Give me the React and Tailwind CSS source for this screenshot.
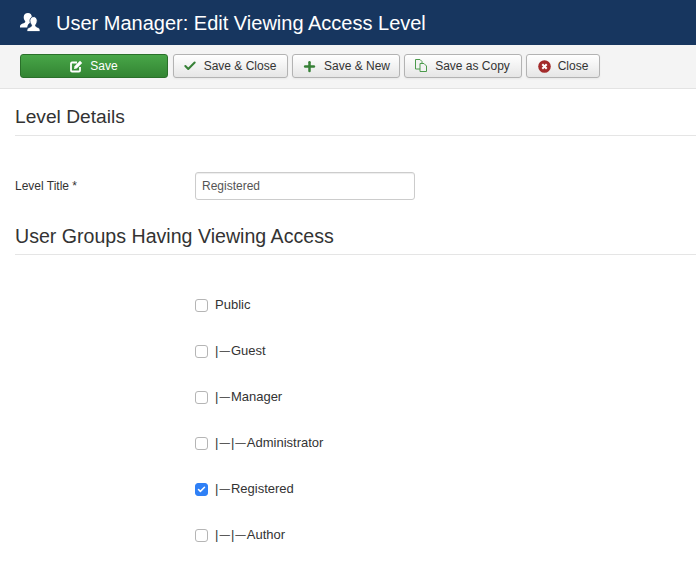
import { Check, Plus } from "lucide-react";

function UsersIcon() {
  return (
    <svg width="20" height="19" viewBox="0 0 20 19" fill="#fff">
      <path d="M8 0c2.300 0 3.800 1.600 3.800 3.900 0 1.500-.6 2.900-1.400 3.800-.5.700-.3 1.300.3 1.700-2 .8-3.200 2.300-3.500 5H0c-.2-1.600.3-2.700 1.700-3.400 1.300-.6 2.900-1 3.400-1.700.3-.5.200-1-.2-1.600C4.200 6.800 3.700 5.500 3.700 3.900 3.800 1.600 5.500 0 8 0z" />
      <path
        d="M13.200 3.500c2.400 0 4 1.800 4 4.200 0 1.600-.6 3-1.400 4-.4.600-.4 1.100 0 1.600.6.700 2 1 3 1.600 1 .6 1.400 1.700 1.200 3.600H7c-.2-1.900.2-3 1.300-3.600 1-.6 2.400-.9 3-1.600.4-.5.4-1 0-1.600-.8-1-1.400-2.400-1.400-4 0-2.400 1.800-4.200 4.300-4.200z"
        stroke="#17365f"
        strokeWidth="0.800"
      />
    </svg>
  );
}

function EditIcon() {
  return (
    <svg width="13" height="13" viewBox="0 0 13 13" fill="none">
      <path d="M10 7v3.500a1 1 0 0 1-1 1H2a1 1 0 0 1-1-1V3.500a1 1 0 0 1 1-1h5" stroke="#fff" strokeWidth="1.800" />
      <path d="M4.500 6.300 10 .8l2.200 2.200-5.500 5.500-2.700.5z" fill="#fff" />
    </svg>
  );
}

function CopyIcon() {
  return (
    <svg width="14" height="14" viewBox="0 0 14 14" fill="none" stroke="#4c9a4c" strokeWidth="1">
      <path d="M1.500 .5h4.500l2 2v7.500h-6.500z" fill="#f3f3f3" />
      <path d="M6 4.500h4l2.500 2.500v5.500H6z" fill="#f3f3f3" />
    </svg>
  );
}

function CloseIcon() {
  return (
    <svg width="13" height="13" viewBox="0 0 13 13">
      <circle cx="6.500" cy="6.500" r="6.300" fill="#a32b2b" />
      <path d="M4.300 4.300l4.400 4.400M8.700 4.300l-4.400 4.400" stroke="#fff" strokeWidth="2" />
    </svg>
  );
}

function ToolButton({ icon, label, width }) {
  return (
    <button className={`flex h-6 items-center justify-center gap-[7px] rounded-[3px] border border-[#b3b3b3] bg-gradient-to-b from-[#ffffff] to-[#e6e6e6] text-xs text-[#333] shadow-[0_1px_2px_rgba(0,0,0,0.05)] ${width}`}>
      {icon}
      {label}
    </button>
  );
}

const groups = [
  { label: "Public", depth: 0 },
  { label: "Guest", depth: 1 },
  { label: "Manager", depth: 1 },
  { label: "Administrator", depth: 2 },
  { label: "Registered", depth: 1, checked: true },
  { label: "Author", depth: 2 },
];

function GroupRow({ label, depth, checked }) {
  return (
    <label className="flex h-[46px] items-center gap-[7px] text-[13px] text-[#333]">
      <span className="relative size-[13px]">
        <input
          type="checkbox"
          defaultChecked={checked}
          className="m-0 block size-[13px] appearance-none rounded-[3px] border border-[#b5b5b5] bg-white checked:border-[#2f80f6] checked:bg-[#2f80f6]"
        />
        {checked && <Check size={9} strokeWidth={4} className="absolute top-[2px] left-[2px] text-white" />}
      </span>
      <span>
        {Array.from({ length: depth }).map((_, i) => (
          <span key={i}>
            |<span className="inline-block w-[12.500px] text-center align-[1px] text-[10.500px]">—</span>
          </span>
        ))}
        {label}
      </span>
    </label>
  );
}

export default function App() {
  return (
    <div className="h-[568px] w-[696px] overflow-hidden bg-white font-['Liberation_Sans',Arial,sans-serif]">
      <header className="flex h-[45px] items-center gap-4 bg-[#17365f] pl-5 text-[#fff]">
        <UsersIcon />
        <h1 className="text-[20px] leading-none">User Manager: Edit Viewing Access Level</h1>
      </header>

      <div className="flex h-11 items-start gap-1 border-b border-[#e3e3e3] bg-[#f4f4f4] pt-[9px] pl-5">
        <button className="mr-[1px] flex h-6 w-[148px] items-center justify-center gap-[7px] rounded-[3px] border border-[#2a702a] bg-gradient-to-b from-[#48a648] to-[#338533] text-xs text-white">
          <EditIcon />
          Save
        </button>
        <ToolButton width="w-[115px] pr-[2px]" label="Save & Close" icon={<Check size={14} strokeWidth={3.500} className="text-[#378137]" />} />
        <ToolButton width="w-[108px]" label="Save & New" icon={<Plus size={15} strokeWidth={4} className="text-[#378137]" />} />
        <ToolButton width="w-[118px] pr-[2px]" label="Save as Copy" icon={<CopyIcon />} />
        <ToolButton width="w-[74px]" label="Close" icon={<CloseIcon />} />
      </div>

      <main className="pl-[15px]">
        <h2 className="mt-[16px] border-b border-[#e5e5e5] pb-[6px] text-[19.200px] leading-[24px] text-[#333]">Level Details</h2>

        <div className="mt-[36px] flex items-center">
          <span className="w-[180px] text-xs text-[#333]">Level Title *</span>
          <input
            readOnly
            value="Registered"
            className="h-7 w-[220px] rounded-[3px] border border-[#ccc] px-[6px] text-xs text-[#555] shadow-[inset_0_1px_1px_rgba(0,0,0,0.075)] outline-none"
          />
        </div>

        <h2 className="mt-[24px] border-b border-[#e5e5e5] pb-[6px] text-[19.600px] leading-[24px] text-[#333]">User Groups Having Viewing Access</h2>

        <div className="mt-[27px] pl-[180px]">
          {groups.map((g) => (
            <GroupRow key={g.label} label={g.label} depth={g.depth} checked={g.checked} />
          ))}
        </div>
      </main>
    </div>
  );
}
